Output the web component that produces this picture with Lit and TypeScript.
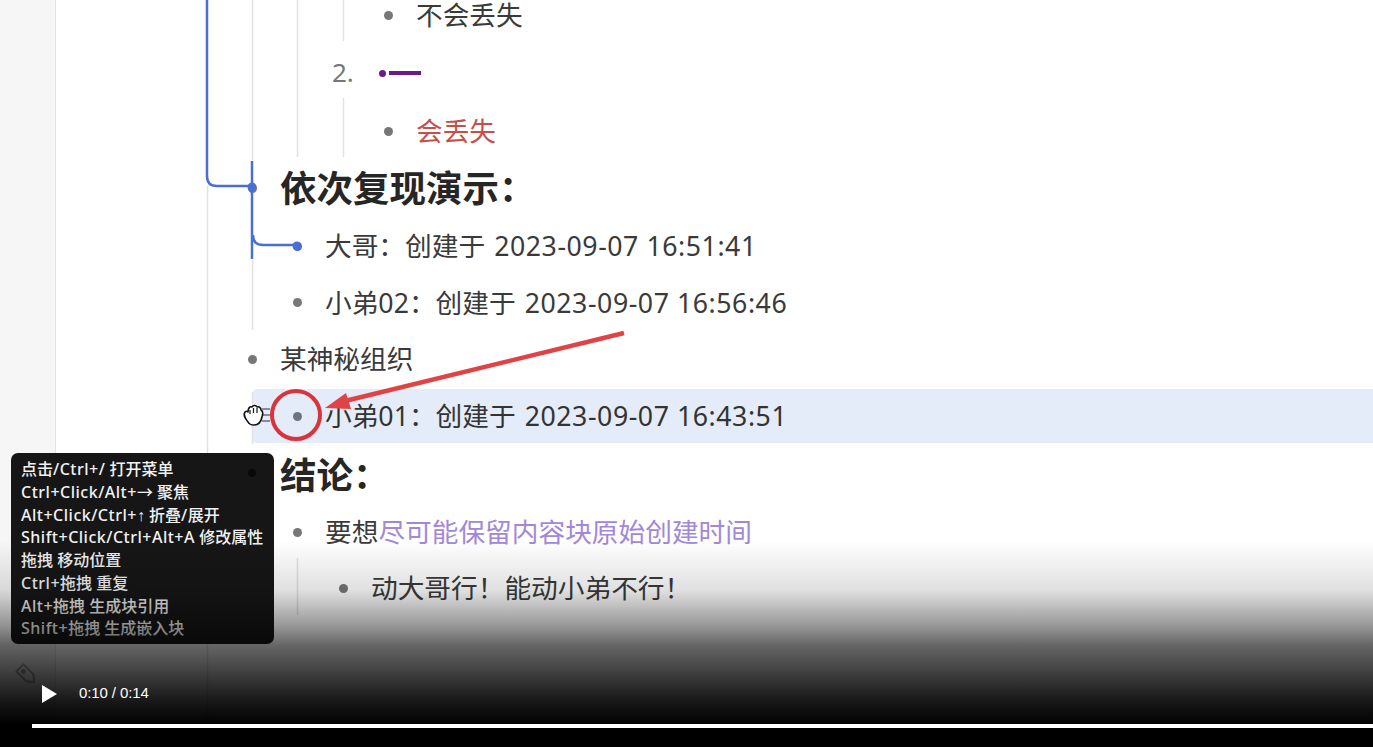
import { LitElement, html, css, svg } from "lit";
import { customElement } from "lit/decorators.js";

type Row = { level: number; h: number; kind?: string; text?: unknown; date?: string; marker?: string };

const rows: Row[] = [
  { level: 3, h: 58, text: "不会丢失" },
  { level: 3, h: 58, kind: "purple", marker: "2." },
  { level: 3, h: 58, text: html`<span class="red">会丢失</span>` },
  { level: 0, h: 56, kind: "heading", text: "依次复现演示：" },
  { level: 1, h: 60, kind: "blue", text: "大哥：创建于", date: "2023-09-07 16:51:41" },
  { level: 1, h: 53, text: "小弟02：创建于", date: "2023-09-07 16:56:46" },
  { level: 0, h: 60, text: "某神秘组织" },
  { level: 1, h: 54, kind: "active", text: "小弟01：创建于", date: "2023-09-07 16:43:51" },
  { level: 0, h: 63, kind: "heading", text: "结论：" },
  { level: 1, h: 52, text: html`要想<span class="violet">尽可能保留内容块原始创建时间</span>` },
  { level: 2, h: 60, text: "动大哥行！能动小弟不行！" },
];

const tips = [
  "点击/Ctrl+/ 打开菜单",
  "Ctrl+Click/Alt+→ 聚焦",
  "Alt+Click/Ctrl+↑ 折叠/展开",
  "Shift+Click/Ctrl+Alt+A 修改属性",
  "拖拽 移动位置",
  "Ctrl+拖拽 重复",
  "Alt+拖拽 生成块引用",
  "Shift+拖拽 生成嵌入块",
];

/* Latin runs in the tooltip are set slightly wider than the CJK runs. */
function tipLine(line: string) {
  return line.split(/([\x21-\x7e]+|↑)/).map((part) => {
    if (part === "↑") return html`<span class="up">${part}</span>`;
    if (/^[\x21-\x7e]+$/.test(part)) return html`<span class="latin">${part}</span>`;
    return part;
  });
}

@customElement("app-root")
export class AppRoot extends LitElement {
  static styles = css`
    :host {
      display: block;
      position: relative;
      width: 1373px;
      height: 747px;
      overflow: hidden;
      background: #fff;
      font-family: "Noto Sans", "Noto Sans CJK SC", sans-serif;
    }
    .shell { display: flex; height: 100%; }
    .side {
      width: 55px;
      flex: none;
      background: #f6f6f6;
      border-right: 1px solid #e4e4e4;
    }
    .doc {
      flex: 1;
      min-width: 0;
      margin-top: -14px;
      padding-left: 196px;
    }
    .row {
      display: flex;
      align-items: center;
      font-size: 26.7px;
      line-height: 1;
      color: #3a3a3a;
      white-space: nowrap;
      position: relative;
    }
    .label { margin-top: 1px; }
    .date { letter-spacing: 0.55px; margin-left: 9px; }
    .l1 { padding-left: 45px; }
    .l2 { padding-left: 91px; }
    .l3 { padding-left: 136px; }
    .dot-box { width: 28px; flex: none; display: flex; }
    .dot {
      width: 9px;
      height: 9px;
      border-radius: 50%;
      background: #777;
      margin-left: -4px;
    }
    .active {
      background: #e5ecf9;
      border-radius: 4px 0 0 4px;
      margin-left: 1px;
      padding-left: 44px;
      color: #333;
    }
    .active .dot { background: #6d7480; }
    .blue .dot { background: #4169d0; }
    .heading { font-size: 36.5px; font-weight: 700; color: #262626; }
    .red { color: #c4504c; }
    .violet { color: #a288d8; }
    .marker {
      position: absolute;
      left: 80px;
      margin-bottom: 3px;
      font-size: 26px;
      color: #777;
    }
    .pdot {
      width: 7px;
      height: 7px;
      border-radius: 50%;
      background: #6a1b85;
      margin: 0 3px 0 -9px;
    }
    .pbar { width: 32px; height: 4px; background: #6a1b85; }
    .over {
      position: absolute;
      left: 0;
      top: 0;
      width: 1373px;
      height: 747px;
      pointer-events: none;
    }
    .tip {
      position: absolute;
      left: 11px;
      top: 453px;
      width: 243px;
      height: 175px;
      padding: 5px 10px 11px;
      background: #161616;
      border-radius: 7px;
      color: #f2f2f2;
      font-size: 16px;
      line-height: 22.8px;
      font-weight: 500;
      white-space: nowrap;
    }
    .tip div { height: 22.75px; }
    .tip::after {
      content: "";
      position: absolute;
      left: 237px;
      top: 16px;
      width: 8px;
      height: 8px;
      border-radius: 50%;
      background: #090909;
    }
    .latin { letter-spacing: 0.5px; }
    .up { display: inline-block; width: 8px; text-align: center; font-family: "Liberation Sans", sans-serif; }
    .shade {
      position: absolute;
      left: 0;
      right: 0;
      top: 540px;
      bottom: 0;
      background: linear-gradient(
        to bottom,
        rgba(0, 0, 0, 0) 0,
        rgba(0, 0, 0, 0.12) 50px,
        rgba(0, 0, 0, 0.4) 85px,
        rgba(0, 0, 0, 0.6) 105px,
        rgba(0, 0, 0, 0.9) 160px,
        rgba(0, 0, 0, 1) 185px
      );
    }
    .player {
      position: absolute;
      left: 42px;
      top: 684px;
      display: flex;
      align-items: center;
      gap: 22px;
      color: #fff;
      font-family: "Liberation Sans", Arial, sans-serif;
      font-size: 15px;
      letter-spacing: -0.1px;
    }
    .play { width: 15px; height: 18px; display: block; }
    .time { margin-bottom: 2px; }
    .bar {
      position: absolute;
      left: 32px;
      right: 0;
      top: 724px;
      height: 4px;
      background: #fff;
    }
  `;

  private lines() {
    const g = "#e2e2e2";
    const b = "#4a6fd2";
    return svg`
      <g fill="none" stroke=${g} stroke-width="1.5">
        <path d="M207.5 186V747"/>
        <path d="M252.5 0V160M252.5 260V330M252.5 392V444"/>
        <path d="M297.5 0V157M297.5 558V615"/>
        <path d="M343.5 0V41M343.5 98V157"/>
      </g>
      <g fill="none" stroke=${b} stroke-width="2.5">
        <path d="M207 0V176Q207 186 217 186H252"/>
        <path d="M252 161V259"/>
        <path d="M253 235Q253 245 263 245H297"/>
      </g>
      <circle cx="252" cy="187" r="4.5" fill=${b}/>
      <circle cx="297" cy="246" r="4.5" fill=${b}/>
    `;
  }

  private marks() {
    const r = "#e04346";
    return svg`
      <path d="M624 333L345 401" fill="none" stroke=${r} stroke-width="4.5"/>
      <path d="M325 408L346 393L351 409Z" fill=${r}/>
      <circle cx="296" cy="415" r="24" fill="none" stroke="#d8343c" stroke-width="4"/>
      <path d="M262 409H270M262 415H270M262 421H270" fill="none" stroke="#6a6f78" stroke-width="1.5"/>
      <path d="M248 422C245 418 243 415 245 412C246 411 247 411 248 412C248 408 250 406 252 407C253 405 256 405 257 407C259 406 261 408 261 410C263 411 263 414 262 417C261 422 258 425 254 425C251 425 249 424 248 422Z" fill="#fff" stroke="#111" stroke-width="1.6" stroke-linejoin="round"/>
      <path d="M250 410V414M253.5 408V413M257 408V413" fill="none" stroke="#111" stroke-width="1.2"/>
      <g transform="translate(27 675) rotate(45)" fill="none" stroke="#a8a8a8" stroke-width="2">
        <path d="M-10 -5H4L10 0L4 5H-10Z" stroke-linejoin="round"/>
        <circle cx="-5" cy="0" r="1.6" fill="#a8a8a8"/>
      </g>
    `;
  }

  render() {
    return html`
      <div class="shell">
        <div class="side"></div>
        <div class="doc">
          ${rows.map(
            (r) => html`
              <div class="row l${r.level} ${r.kind ?? ""}" style="height:${r.h}px">
                ${r.kind === "purple"
                  ? html`<span class="marker">${r.marker}</span
                      ><span class="pdot"></span><span class="pbar"></span>`
                  : html`<span class="dot-box"><span class="dot"></span></span
                      ><span class="label"
                        >${r.text}${r.date ? html`<span class="date">${r.date}</span>` : ""}</span
                      >`}
              </div>
            `
          )}
        </div>
      </div>
      <svg class="over" viewBox="0 0 1373 747">${this.lines()}</svg>
      <svg class="over" viewBox="0 0 1373 747">${this.marks()}</svg>
      <div class="tip">${tips.map((t) => html`<div>${tipLine(t)}</div>`)}</div>
      <div class="shade"></div>
      <div class="player">
        <svg class="play" viewBox="0 0 15 18"><path d="M0 0L15 9L0 18Z" fill="#fff"/></svg>
        <span class="time">0:10 / 0:14</span>
      </div>
      <div class="bar"></div>
    `;
  }
}
